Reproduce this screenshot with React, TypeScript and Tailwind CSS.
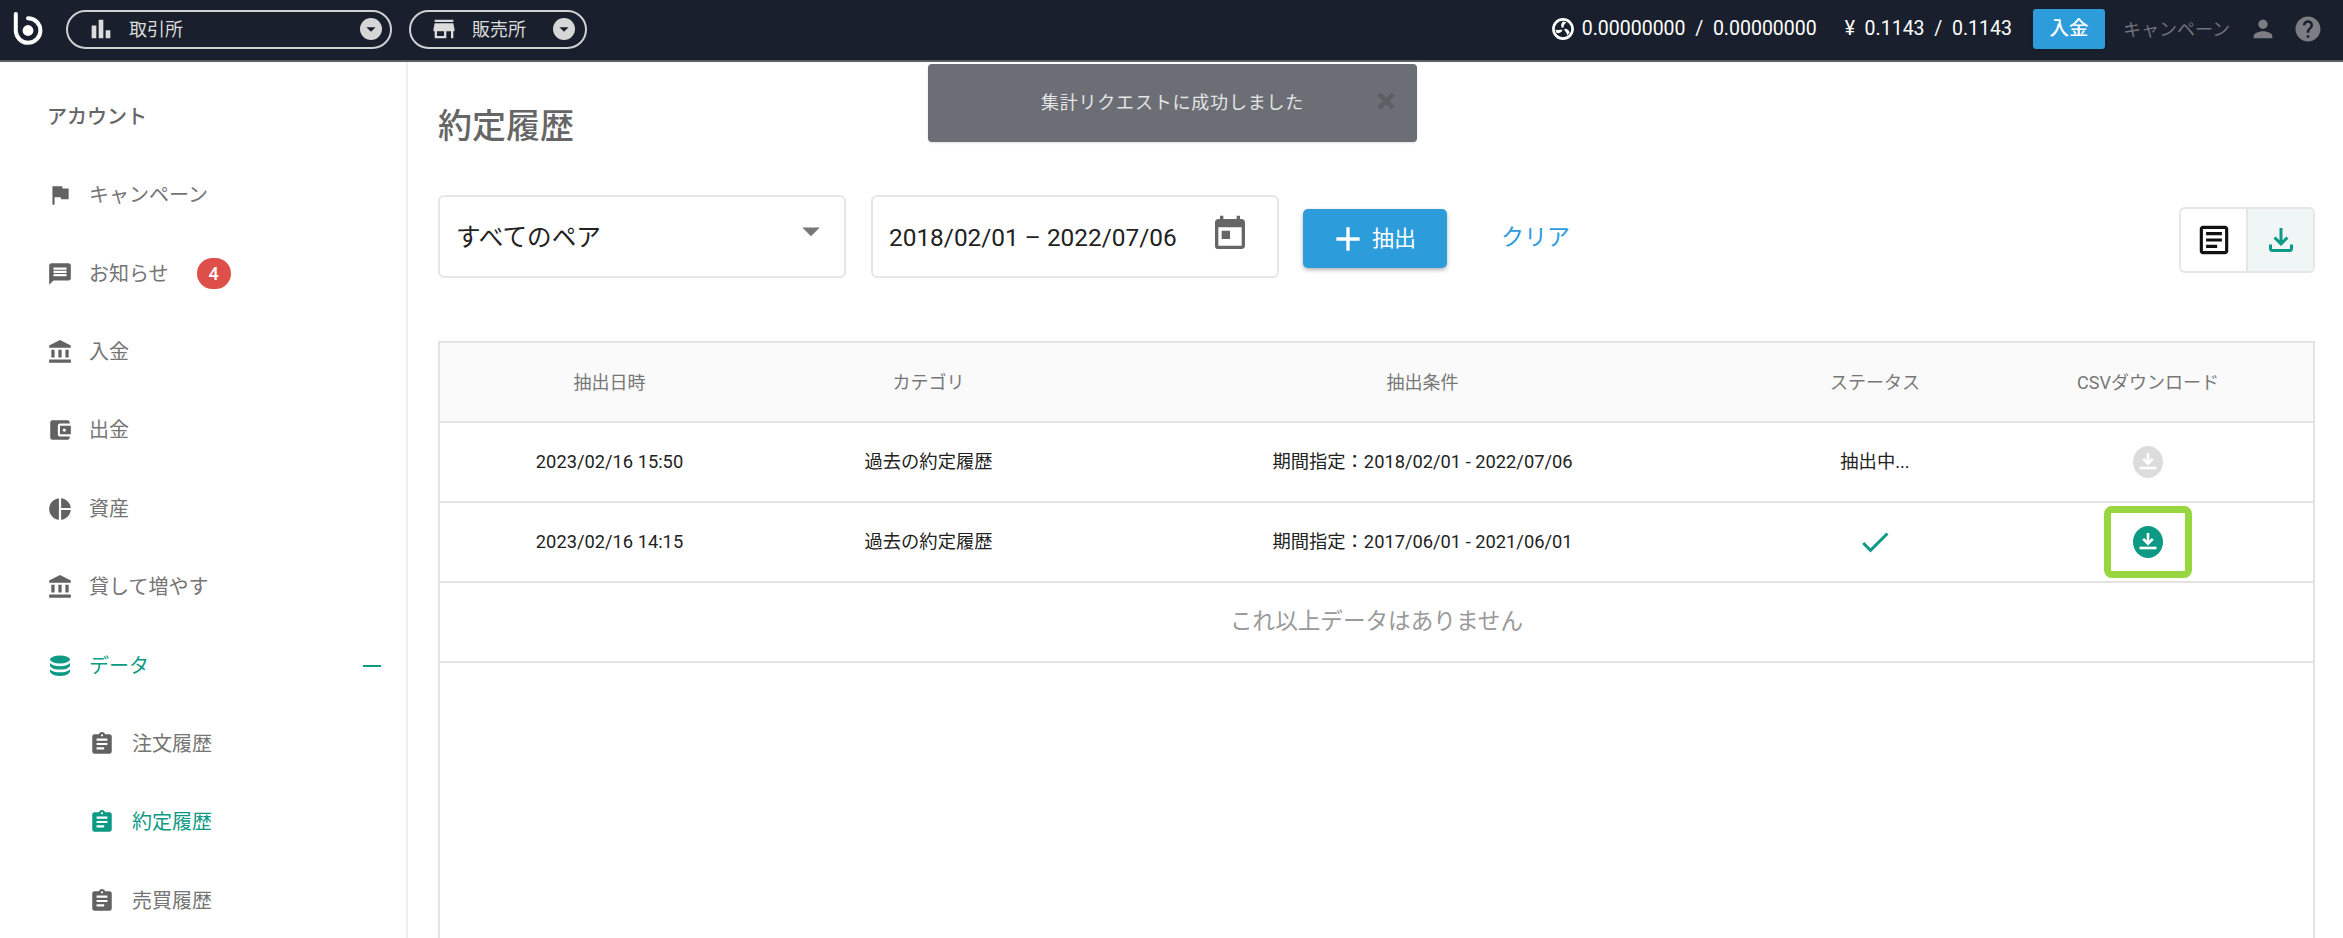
import type { ReactNode } from "react";
import {
  MdAccountBalance,
  MdAccountBalanceWallet,
  MdAdd,
  MdArrowDropDown,
  MdAssignment,
  MdBarChart,
  MdCheck,
  MdFlag,
  MdHelp,
  MdMessage,
  MdOutlineArticle,
  MdOutlineFileDownload,
  MdPerson,
  MdPieChart,
  MdStore,
  MdToday,
} from "react-icons/md";

function Logo() {
  return (
    <svg width="30" height="34" viewBox="0 0 30 34" fill="none" stroke="white" aria-hidden="true">
      <path d="M2.8 2 V18.5 A12.3 12.3 0 1 0 15 6.2" strokeWidth="4" strokeLinecap="round" />
      <circle cx="15" cy="18.5" r="5.4" fill="white" stroke="none" />
    </svg>
  );
}

function CoinIcon() {
  const blade = "M11 11 C8.6 8.6 8.6 5.4 11 3.4 L14.4 4.2 C12 6 11.6 8.4 11 11 Z";
  return (
    <svg width="22" height="22" viewBox="0 0 22 22" aria-hidden="true">
      <circle cx="11" cy="11" r="9.6" fill="#191f2c" stroke="white" strokeWidth="2.6" />
      <path d={blade} fill="white" />
      <path d={blade} fill="white" transform="rotate(120 11 11)" />
      <path d={blade} fill="white" transform="rotate(240 11 11)" />
      <circle cx="11" cy="11" r="1.6" fill="#191f2c" />
    </svg>
  );
}

function DataIcon() {
  return (
    <svg width="22" height="22" viewBox="0 0 22 22" fill="#0d9a84" aria-hidden="true">
      <ellipse cx="11" cy="4.5" rx="10" ry="4" />
      <path d="M1 8 C3 10.6 7 11.2 11 11.2 C15 11.2 19 10.6 21 8 V11 C19 14 15 14.6 11 14.6 C7 14.6 3 14 1 11 Z" />
      <path d="M1 14.4 C3 16.6 7 17.2 11 17.2 C15 17.2 19 16.6 21 14.4 V17 C19 20 15 21 11 21 C7 21 3 20 1 17 Z" />
    </svg>
  );
}

function DownloadDot({ color }: { color: string }) {
  return (
    <svg width="30" height="32" viewBox="0 0 30 32" aria-hidden="true">
      <ellipse cx="15" cy="16" rx="15" ry="16" fill={color} />
      <g fill="none" stroke="white" strokeWidth="2.6">
        <path d="M15 7 V17.5" />
        <path d="M10.2 12.8 L15 17.6 L19.8 12.8" />
        <path d="M6.5 22 H23.5" />
      </g>
    </svg>
  );
}

type NavItem = { label: string; icon: ReactNode; active?: boolean; sub?: boolean; badge?: string; minus?: boolean };

const nav: NavItem[] = [
  { label: "キャンペーン", icon: <MdFlag size={26} /> },
  { label: "お知らせ", icon: <MdMessage size={26} />, badge: "4" },
  { label: "入金", icon: <MdAccountBalance size={26} /> },
  { label: "出金", icon: <MdAccountBalanceWallet size={26} /> },
  { label: "資産", icon: <MdPieChart size={26} /> },
  { label: "貸して増やす", icon: <MdAccountBalance size={26} /> },
  { label: "データ", icon: <DataIcon />, active: true, minus: true },
  { label: "注文履歴", icon: <MdAssignment size={26} />, sub: true },
  { label: "約定履歴", icon: <MdAssignment size={26} />, sub: true, active: true },
  { label: "売買履歴", icon: <MdAssignment size={26} />, sub: true },
];

const rows = [
  { date: "2023/02/16 15:50", range: "期間指定：2018/02/01 - 2022/07/06", done: false },
  { date: "2023/02/16 14:15", range: "期間指定：2017/06/01 - 2021/06/01", done: true },
];

const gridCols = "grid grid-cols-[339px_299px_689px_216px_1fr] items-center text-center";

export default function App() {
  return (
    <div className="relative h-[938px] overflow-hidden bg-white font-['Roboto','Noto_Sans_CJK_JP',sans-serif]">
      <header className="flex h-[62px] items-center border-b-2 border-[#5a5e66] bg-[#191f2c] pb-[2px] pl-[13px] pr-[20px] text-white">
        <Logo />
        <div className="ml-[23px] flex h-[39px] w-[326px] items-center rounded-full border-2 border-[#cfd0d2] pl-[19px] pr-[8px] text-[18px] text-[#dcdcdc]">
          <MdBarChart size={28} />
          <span className="ml-[14px] flex-1">取引所</span>
          <span className="flex h-[22px] w-[22px] items-center justify-center rounded-full bg-[#d6d6d6] text-[#191f2c]">
            <MdArrowDropDown size={22} />
          </span>
        </div>
        <div className="ml-[17px] flex h-[39px] w-[178px] items-center rounded-full border-2 border-[#cfd0d2] pl-[19px] pr-[10px] text-[18px] text-[#dcdcdc]">
          <MdStore size={28} />
          <span className="ml-[14px] flex-1">販売所</span>
          <span className="flex h-[22px] w-[22px] items-center justify-center rounded-full bg-[#d6d6d6] text-[#191f2c]">
            <MdArrowDropDown size={22} />
          </span>
        </div>
        <div className="ml-auto flex items-center text-[19.5px]">
          <CoinIcon />
          <span className="ml-[8px] whitespace-pre">0.00000000  /  0.00000000</span>
          <span className="ml-[28px] whitespace-pre">¥  0.1143  /  0.1143</span>
        </div>
        <span className="ml-[21px] flex h-[40px] w-[72px] items-center justify-center rounded-[3px] bg-[#2d9cdb] text-[19.5px] font-medium shadow">
          入金
        </span>
        <span className="ml-[18px] text-[18px] text-[#6f7279]">キャンペーン</span>
        <MdPerson size={28} className="ml-[19px] text-[#7b7d82]" />
        <MdHelp size={30} className="ml-[16px] text-[#7b7d82]" />
      </header>

      <div className="flex">
        <aside className="w-[408px] shrink-0 border-r-2 border-[#eeeeee]">
          <h2 className="h-[94px] pt-[41px] pl-[47px] text-[20px] leading-[28px] font-medium text-[#666666]">アカウント</h2>
          {nav.map((item) => (
            <div
              key={item.label}
              className={`flex h-[78.4px] items-center pr-[25px] text-[20px] ${item.sub ? "pl-[89px]" : "pl-[47px]"} ${item.active ? "text-[#0d9a84]" : "text-[#757575]"}`}
            >
              <span className={`flex w-[26px] justify-center ${item.active ? "text-[#0d9a84]" : "text-[#626262]"}`}>{item.icon}</span>
              <span className={item.sub ? "ml-[17px]" : "ml-[16px]"}>{item.label}</span>
              {item.badge && (
                <span className="ml-[28px] flex h-[31px] w-[34px] items-center justify-center rounded-full bg-[#dd4f48] text-[18px] font-medium text-white">
                  {item.badge}
                </span>
              )}
              {item.minus && <span className="ml-auto h-[2px] w-[18px] bg-[#0d9a84]" />}
            </div>
          ))}
        </aside>

        <main className="min-w-0 flex-1 pl-[30px] pr-[28px] pt-[44px]">
          <h1 className="h-[40px] text-[34px] leading-[40px] font-medium text-[#666666]">約定履歴</h1>

          <div className="mt-[49px] flex h-[83px] items-start">
            <div className="flex h-[83px] w-[408px] items-center justify-between rounded-[6px] border-2 border-[#e6e6e6] pl-[16px] pr-[12px] text-[24.6px] text-[#222222]">
              <span className="mt-[3px]">すべてのペア</span>
              <MdArrowDropDown size={42} className="-mt-[12px] text-[#777777]" />
            </div>
            <div className="ml-[25px] flex h-[83px] w-[408px] items-center rounded-[6px] border-2 border-[#e6e6e6] pl-[16px] text-[24.4px] text-[#222222]">
              <span className="mt-[3px]">2018/02/01 – 2022/07/06</span>
              <MdToday size={40} className="ml-[33px] -mt-[6px] text-[#666666]" />
            </div>
            <button className="ml-[24px] mt-[14px] flex h-[59px] w-[144px] items-center justify-center rounded-[5px] bg-[#2d9cdb] text-[22px] text-white shadow-[0_2px_4px_rgba(0,0,0,0.3)]">
              <MdAdd size={40} className="-ml-[6px]" />
              <span className="ml-[4px]">抽出</span>
            </button>
            <span className="ml-[54px] mt-[26px] text-[23px] text-[#2d9cdb]">クリア</span>
            <div className="ml-auto mt-[12px] flex h-[66px] w-[136px] overflow-hidden rounded-[6px] border-2 border-[#e6e6e6]">
              <span className="flex flex-1 items-center justify-center border-r-2 border-[#e6e6e6] text-[#111111]">
                <MdOutlineArticle size={38} />
              </span>
              <span className="flex flex-1 items-center justify-center bg-[#eff6f5] text-[#0d9a84]">
                <MdOutlineFileDownload size={36} />
              </span>
            </div>
          </div>

          <div className="mt-[63px] h-[600px] border-2 border-[#e3e3e3] text-[18.3px]">
            <div className={`${gridCols} h-[80px] border-b-2 border-[#e3e3e3] bg-[#fafafa] text-[18px] text-[#777777]`}>
              <span>抽出日時</span>
              <span>カテゴリ</span>
              <span>抽出条件</span>
              <span>ステータス</span>
              <span>CSVダウンロード</span>
            </div>
            {rows.map((row) => (
              <div key={row.date} className={`${gridCols} h-[80px] border-b-2 border-[#e3e3e3] text-[#222222]`}>
                <span>{row.date}</span>
                <span>過去の約定履歴</span>
                <span>{row.range}</span>
                <span className="flex justify-center">
                  {row.done ? <MdCheck size={36} className="text-[#0d9a84]" /> : "抽出中..."}
                </span>
                <span className="flex justify-center">
                  {row.done ? (
                    <span className="flex h-[72px] w-[88px] items-center justify-center rounded-[8px] border-[7px] border-[#97d63f]">
                      <DownloadDot color="#0d9a84" />
                    </span>
                  ) : (
                    <DownloadDot color="#dcdcdc" />
                  )}
                </span>
              </div>
            ))}
            <div className="flex h-[80px] items-center justify-center border-b-2 border-[#e3e3e3] text-[22.6px] text-[#999999]">
              これ以上データはありません
            </div>
          </div>
        </main>
      </div>

      {/* toast sits over the page */}
      <div className="absolute left-[928px] top-[64px] flex h-[78px] w-[489px] items-center justify-center rounded-[4px] bg-[#6b6e75] pb-[2px] text-[18px] tracking-[0.8px] text-[#e4e4e4] shadow-sm">
        集計リクエストに成功しました
        <svg width="18" height="18" viewBox="0 0 18 18" className="absolute right-[22px] top-[28px]" aria-hidden="true">
          <path d="M2 2 L16 16 M16 2 L2 16" stroke="#5c5e63" strokeWidth="4.5" />
        </svg>
      </div>
    </div>
  );
}
